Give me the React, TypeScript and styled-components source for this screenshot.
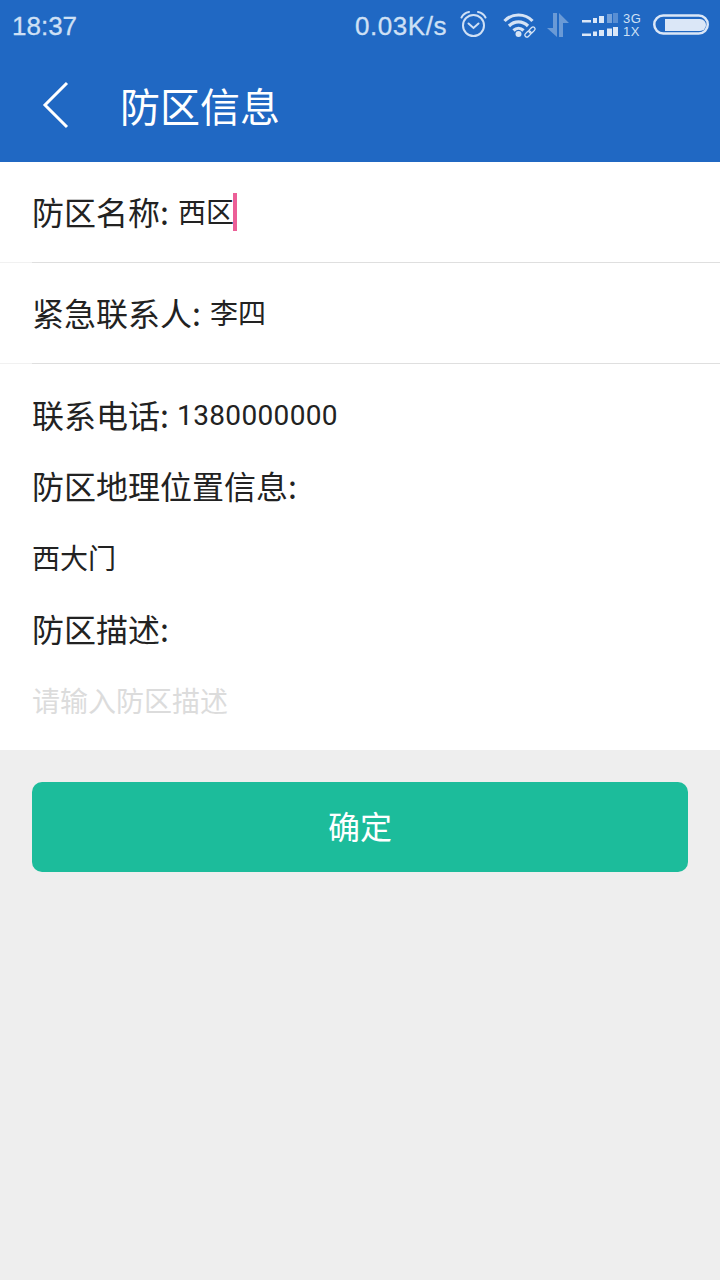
import React from "react";
import styled, { createGlobalStyle } from "styled-components";

const Global = createGlobalStyle`
  html, body { margin: 0; padding: 0; background: #eeeeee; }
  body { font-family: Roboto, "Noto Sans CJK SC", sans-serif; }
`;
const Page = styled.div`
  width: 720px; height: 1280px; display: flex; flex-direction: column; background: #eeeeee; overflow: hidden;
`;
const Top = styled.header`
  background: #2068c3; height: 162px; display: flex; flex-direction: column; flex: none;
`;
const StatusBar = styled.div`
  height: 50px; display: flex; align-items: center; padding: 0 11px 0 12px; color: #cfe0f5;
  font-family: "Liberation Sans", Arial, sans-serif;
`;
const Time = styled.span`
  font-size: 26px; flex: 1; padding-top: 2px; -webkit-text-stroke: 0.3px #cfe0f5;
`;
const Speed = styled.span`
  font-size: 26px; letter-spacing: 0.55px; margin-right: 13px; padding-top: 2px; -webkit-text-stroke: 0.3px #cfe0f5;
`;
const Svg = styled.svg<{ $mr?: number }>`
  display: block; flex: none; margin-right: ${p => p.$mr ?? 0}px;
`;
const NetLabels = styled.div`
  display: flex; flex-direction: column; font-size: 13px; line-height: 13px; letter-spacing: 0.6px;
  margin-right: 12px; width: 18px;
`;
const TitleBar = styled.div`
  flex: 1; display: flex; align-items: center; padding-left: 42px; padding-bottom: 2px;
`;
const Title = styled.h1`
  margin: 0 0 0 50px; font-weight: 400; font-size: 40px; color: #fff;
  font-family: "Noto Sans CJK SC", sans-serif; line-height: 1;
`;
const Form = styled.section`
  background: #fff; display: flex; flex-direction: column; height: 588px; flex: none;
`;
const Row = styled.div`
  height: 101px; box-sizing: border-box; display: flex; align-items: center;
  padding-left: 32px; padding-bottom: 2px; flex: none;
  background:
    linear-gradient(#dfdfdf, #dfdfdf) 32px 100% / 100% 1px no-repeat,
    linear-gradient(#f1f1f1, #f1f1f1) 0 100% / 100% 1px no-repeat;
`;
const Stack = styled.div`
  display: flex; flex-direction: column; padding-top: 15px;
`;
const Line = styled.div`
  height: 71.5px; display: flex; align-items: center; padding-left: 32px; flex: none;
`;
const Label = styled.span`
  font-size: 32px; line-height: 40px; padding-bottom: 2px; color: #222;
  font-family: "Noto Sans CJK SC", sans-serif; white-space: pre;
`;
const Value = styled.span<{ $muted?: boolean; $inline?: boolean; $digits?: boolean }>`
  font-size: 28px; line-height: 40px; color: ${p => (p.$muted ? "#dcdcdc" : "#222")};
  font-family: Roboto, "Noto Sans CJK SC", sans-serif; white-space: pre;
  padding-top: ${p => (p.$digits ? 2 : 4)}px;
  margin-left: ${p => (p.$digits ? 1 : p.$inline ? 2 : 0)}px;
  letter-spacing: ${p => (p.$digits ? 0.35 : 0)}px;
`;
const Caret = styled.span`
  display: inline-block; width: 4px; height: 38px; background: #ec5f97; flex: none; margin-left: -1px;
`;
const Submit = styled.button`
  margin: 32px 32px 0; height: 90px; border: 0; border-radius: 10px; background: #1cbc9b; color: #fff;
  font-size: 32px; line-height: 40px; font-family: "Noto Sans CJK SC", sans-serif; flex: none; padding: 0 0 5px;
`;

const Alarm = () => (
  <Svg width="28" height="28" viewBox="0 0 28 28" fill="none" stroke="#cfe0f5" strokeWidth="2" strokeLinecap="round" $mr={15}>
    <circle cx="13.5" cy="14.500" r="10.500" />
    <path d="M8.500 12.500 13.500 17l5-4.500" />
    <path d="M1.500 6.500C3 3.500 6 1.500 9 1M25.500 6.500C24 3.500 21 1.500 18 1" />
  </Svg>
);
const Wifi = () => (
  <Svg width="34" height="26" viewBox="0 0 34 26" fill="none" $mr={10}>
    <g stroke="#d5e3f5" strokeWidth="3.200">
      <path d="M1.500 9C9 1 22 1 29.500 9" />
      <path d="M6 14C11.500 8.500 19.500 8.500 25 14" />
      <path d="M10.500 18.500C13.500 15.500 17.500 15.500 20.500 18.500" />
    </g>
    <circle cx="15.500" cy="22" r="3" fill="#d5e3f5" />
    <g stroke="#d5e3f5" strokeWidth="1.300">
      <rect x="21.500" y="20" width="7" height="4" rx="2" transform="rotate(-45 25 22)" />
      <rect x="25.500" y="16" width="7" height="4" rx="2" transform="rotate(-45 29 18)" />
    </g>
  </Svg>
);
const Arrows = () => (
  <Svg width="24" height="24" viewBox="0 0 24 24" fill="#6a9ad6" $mr={10}>
    <path d="M6 0h4v24L0 15h6z" />
    <path d="M12 24V0l10 10h-6v14z" />
  </Svg>
);
const Signal = () => {
  const top = [
    [1, 10, 9, 2.5, 1], [12, 8, 4, 5, 1], [18, 6, 5, 7, 1], [26, 4, 5, 9, 0.45], [32, 3, 5, 10, 0.3],
  ];
  const bottom = [
    [1, 23.5, 9, 2.5], [12, 21.5, 4, 4.5], [18, 20, 5, 6], [26, 18.5, 5, 7.5], [32, 17, 5, 9],
  ];
  return (
    <Svg width="38" height="30" viewBox="0 0 38 30" fill="#dbe7f7" $mr={4}>
      {top.map(([x, y, w, h, o], i) => <rect key={i} x={x} y={y} width={w} height={h} opacity={o} />)}
      {bottom.map(([x, y, w, h], i) => <rect key={i} x={x} y={y} width={w} height={h} />)}
    </Svg>
  );
};
const Battery = () => (
  <Svg width="56" height="22" viewBox="0 0 56 22" fill="none">
    <rect x="1.250" y="1.500" width="53.500" height="18" rx="9" stroke="#dbe7f7" strokeWidth="2.500" />
    <path d="M12 5h35a6 6 0 0 1 0 12H12z" fill="#dbe7f7" />
  </Svg>
);
const Back = () => (
  <Svg width="28" height="48" viewBox="0 0 28 48" fill="none" stroke="#fff" strokeWidth="3">
    <path d="M25 2 3 24l22 22" />
  </Svg>
);

export default function App() {
  return (
    <Page>
      <Global />
      <Top>
        <StatusBar>
          <Time>18:37</Time>
          <Speed>0.03K/s</Speed>
          <Alarm />
          <Wifi />
          <Arrows />
          <Signal />
          <NetLabels><span>3G</span><span>1X</span></NetLabels>
          <Battery />
        </StatusBar>
        <TitleBar>
          <Back />
          <Title>防区信息</Title>
        </TitleBar>
      </Top>
      <Form>
        <Row><Label>防区名称: </Label><Value $inline>西区</Value><Caret /></Row>
        <Row><Label>紧急联系人: </Label><Value $inline>李四</Value></Row>
        <Stack>
          <Line><Label>联系电话: </Label><Value $digits>1380000000</Value></Line>
          <Line><Label>防区地理位置信息:</Label></Line>
          <Line><Value>西大门</Value></Line>
          <Line><Label>防区描述:</Label></Line>
          <Line><Value $muted>请输入防区描述</Value></Line>
        </Stack>
      </Form>
      <Submit>确定</Submit>
    </Page>
  );
}
